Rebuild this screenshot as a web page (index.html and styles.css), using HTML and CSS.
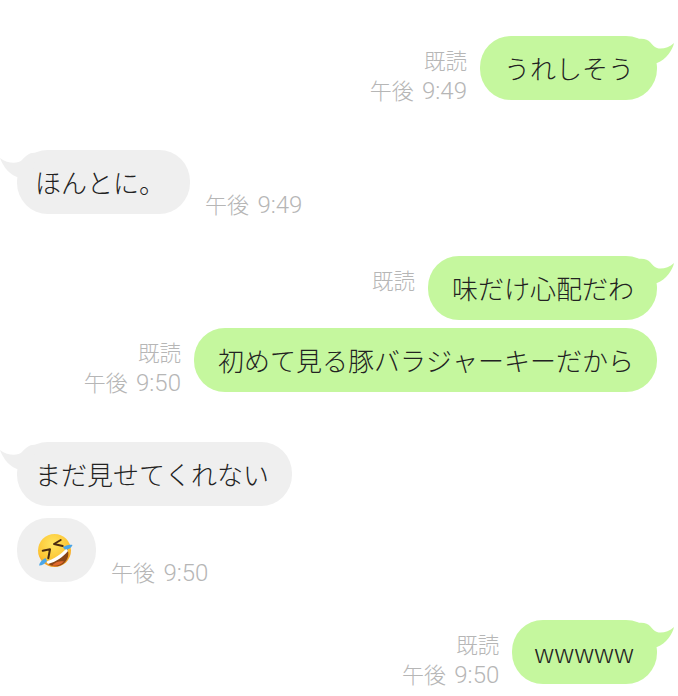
FILE: index.html
```html
<!DOCTYPE html>
<html lang="ja">
<head>
<meta charset="utf-8">
<title>トーク</title>
<link rel="stylesheet" href="styles.css">
</head>
<body>
<main class="chat">
  <div class="row out">
    <div class="meta"><div class="read">既読</div><div>午後 <span class="clock">9:49</span></div></div>
    <div class="bubble green">うれしそう
      <svg class="tail tail-out" viewBox="0 0 32 32"><path d="M-4 3 C2 2 6 4 8 6 C10 8 12 11 15 12 C19 13.500 27 12 32 7 C31 13 24 24 15 27 L0 27 Z"/></svg>
    </div>
  </div>
  <div class="row in gap-50">
    <div class="bubble gray pad-wide">ほんとに。
      <svg class="tail tail-in" viewBox="0 0 32 32"><path d="M36 3 C30 2 26 6 22 10 C18 14 8 14 0 8 C2 14 8 24 17 27 H32 Z"/></svg>
    </div>
    <div class="meta low">午後 <span class="clock">9:49</span></div>
  </div>
  <div class="row out gap-42">
    <div class="meta"><div class="read">既読</div></div>
    <div class="bubble green">味だけ心配だわ
      <svg class="tail tail-out" viewBox="0 0 32 32"><path d="M-4 3 C2 2 6 4 8 6 C10 8 12 11 15 12 C19 13.500 27 12 32 7 C31 13 24 24 15 27 L0 27 Z"/></svg>
    </div>
  </div>
  <div class="row out gap-8">
    <div class="meta"><div class="read">既読</div><div>午後 <span class="clock">9:50</span></div></div>
    <div class="bubble green">初めて見る豚バラジャーキーだから</div>
  </div>
  <div class="row in gap-50">
    <div class="bubble gray">まだ見せてくれない
      <svg class="tail tail-in" viewBox="0 0 32 32"><path d="M36 3 C30 2 26 6 22 10 C18 14 8 14 0 8 C2 14 8 24 17 27 H32 Z"/></svg>
    </div>
  </div>
  <div class="row in gap-12">
    <div class="bubble gray emoji-bubble">
      <svg class="emoji" viewBox="0 0 36 36" role="img" aria-label="🤣">
        <defs>
          <radialGradient id="face" cx="45%" cy="30%" r="72%">
            <stop offset="0" stop-color="#ffe55f"/>
            <stop offset="0.7" stop-color="#fdc433"/>
            <stop offset="1" stop-color="#f09018"/>
          </radialGradient>
        </defs>
        <circle cx="18.500" cy="17.500" r="16.500" fill="url(#face)"/>
        <path d="M10 28.700 C18 27 26 22 31 15.500 C34 21 32 27 27 31 C21 35 14 33.500 10 28.700 Z" fill="#8a4616"/>
        <path d="M10 28.700 C18 26 26 21 30.500 15 L32 18 C27 24 20 29 12 31 Z" fill="#fff"/>
        <path d="M16 32.500 C19 29 24 27.500 28 28.500 C24 32.500 20 33.500 16 32.500 Z" fill="#e0692e"/>
        <path d="M24.700 7 L18 11 L26.700 13" fill="none" stroke="#4a2a10" stroke-width="2" stroke-linecap="round" stroke-linejoin="round"/>
        <path d="M6.700 17.700 L14 16.300 L12.300 25.300" fill="none" stroke="#4a2a10" stroke-width="2" stroke-linecap="round" stroke-linejoin="round"/>
        <path d="M27 14.500 C29 12.500 33 11.500 36.500 12 C35.500 15 32.500 16.500 29 16.500 Z" fill="#4aa6e8"/>
        <path d="M3 32.500 C3.500 29.500 6 26.500 9.500 25 L11 28 C9 30.500 6.500 32.500 3 32.500 Z" fill="#4aa6e8"/>
      </svg>
    </div>
    <div class="meta low">午後 <span class="clock">9:50</span></div>
  </div>
  <div class="row out gap-38">
    <div class="meta"><div class="read">既読</div><div>午後 <span class="clock">9:50</span></div></div>
    <div class="bubble green latin">wwwww
      <svg class="tail tail-out" viewBox="0 0 32 32"><path d="M-4 3 C2 2 6 4 8 6 C10 8 12 11 15 12 C19 13.500 27 12 32 7 C31 13 24 24 15 27 L0 27 Z"/></svg>
    </div>
  </div>
</main>
</body>
</html>
```
FILE: styles.css
```css
* { box-sizing: border-box; }
html, body { margin: 0; padding: 0; background: #fff; }
body { overflow: hidden; height: 696px; }
.chat {
  display: flex;
  flex-direction: column;
  padding: 36px 21px 0 17px;
  font-family: "Noto Sans CJK JP", "Liberation Sans", sans-serif;
  font-weight: 300;
  font-kerning: none;
}
.row { display: flex; align-items: flex-start; height: 64px; flex: none; }
.row.out { justify-content: flex-end; gap: 13px; }
.row.in { justify-content: flex-start; gap: 15px; }
.gap-50 { margin-top: 50px; }
.gap-42 { margin-top: 42px; }
.gap-38 { margin-top: 38px; }
.gap-12 { margin-top: 12px; }
.gap-8 { margin-top: 8px; }
.bubble {
  position: relative;
  height: 64px;
  border-radius: 31px;
  font-size: 26px;
  line-height: 62px;
  color: #222;
  white-space: nowrap;
  display: flex;
  align-items: center;
}
.green { background: #c5f79e; padding: 0 23px 0 24px; }
.gray { background: #efefef; padding: 0 23px 0 18px; }
.gray.pad-wide { padding-right: 25px; }
.latin { font-kerning: normal; padding-left: 22px; }
.emoji-bubble { width: 79px; padding: 0 0 0 19px; }
.emoji { width: 36px; height: 36px; display: block; margin-top: 2px; overflow: visible; }
.meta {
  margin-top: 11px;
  color: #b6b6b6;
  font-family: "Roboto", "Noto Sans CJK JP", sans-serif;
  font-weight: 300;
  font-size: 22px;
  line-height: 30px;
  text-align: right;
  white-space: nowrap;
  word-spacing: 3px;
}
.clock { font-size: 24px; }
.read { font-size: 21.500px; line-height: 29px; }
.meta.low { margin-top: 40px; }
.tail { position: absolute; width: 32px; height: 32px; top: 0; overflow: visible; }
.tail-out { right: -17px; fill: #c5f79e; }
.tail-in { left: -17px; fill: #efefef; }
```
